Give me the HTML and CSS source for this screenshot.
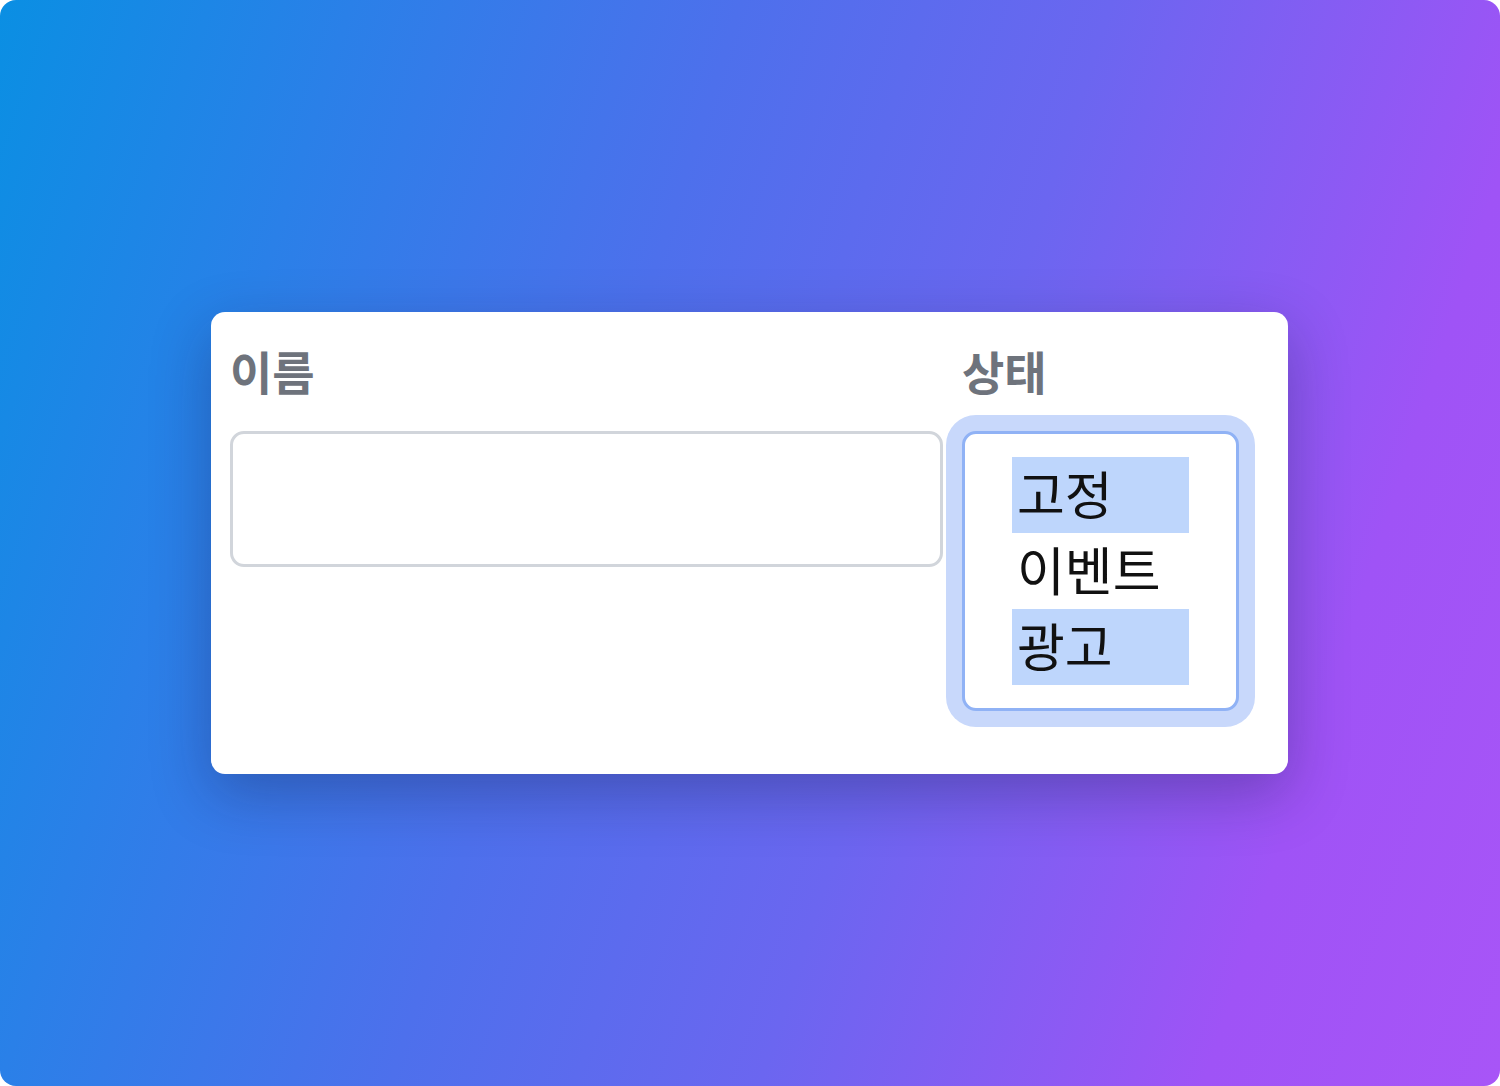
FILE: index.html
```html
<!DOCTYPE html>
<html lang="ko">
<head>
    <meta charset="utf-8">
    <title>상태 선택</title>
    <link rel="stylesheet" href="styles.css">
</head>
<body>
    <div class="backdrop">
        <form class="card">
            <div class="field field-name">
                <label class="field-label" for="name">이름</label>
                <input type="text" id="name" class="text-input">
            </div>

            <div class="field field-status">
                <label class="field-label" id="statusLabel">상태</label>
                <div class="listbox" role="listbox" aria-multiselectable="true" aria-labelledby="statusLabel" tabindex="0">
                    <div class="option selected" role="option" aria-selected="true">고정</div>
                    <div class="option" role="option" aria-selected="false">이벤트</div>
                    <div class="option selected" role="option" aria-selected="true">광고</div>
                </div>
            </div>
        </form>
    </div>
</body>
</html>
```

FILE: styles.css
```css
html, body {
    margin: 0;
    padding: 0;
    background: #ffffff;
}

body {
    font-family: "Noto Sans CJK KR", "Noto Sans", sans-serif;
}

.backdrop {
    width: 1500px;
    height: 1086px;
    border-radius: 16px;
    background: linear-gradient(108deg, #0a8fe3 0%, #2a80e8 19%, #4d70ec 40%, #6b66f0 60%, #9f53f6 84%, #a855f7 100%);
    display: flex;
    align-items: center;
    justify-content: center;
}

.card {
    width: 1009px;
    background: #ffffff;
    border-radius: 14px;
    padding: 31px 49px 63px 19px;
    margin-right: 1px;
    display: flex;
    align-items: flex-start;
    gap: 19px;
    box-shadow: 0 20px 60px rgba(20, 20, 60, 0.3);
}

.field {
    display: flex;
    flex-direction: column;
}

.field-name {
    flex: 1;
}

.field-status {
    width: 277px;
}

.field-label {
    display: block;
    font-size: 46px;
    font-weight: 700;
    line-height: 55px;
    color: #6e737c;
    margin-bottom: 33px;
}

.text-input {
    box-sizing: border-box;
    width: 100%;
    height: 136px;
    border: 3px solid #d1d5db;
    border-radius: 14px;
    background: #ffffff;
    font-family: inherit;
    font-size: 46px;
    padding: 0 24px;
    outline: none;
}

.listbox {
    box-sizing: border-box;
    width: 277px;
    height: 280px;
    border: 3px solid #90b2f5;
    border-radius: 14px;
    padding: 23px 47px;
    background: #ffffff;
    box-shadow: 0 0 0 16px #c8d8fb;
    outline: none;
}

.option {
    height: 76px;
    line-height: 72px;
    padding-left: 5px;
    font-size: 52px;
    color: #111111;
}

.option.selected {
    background: #bed6fc;
}
```
